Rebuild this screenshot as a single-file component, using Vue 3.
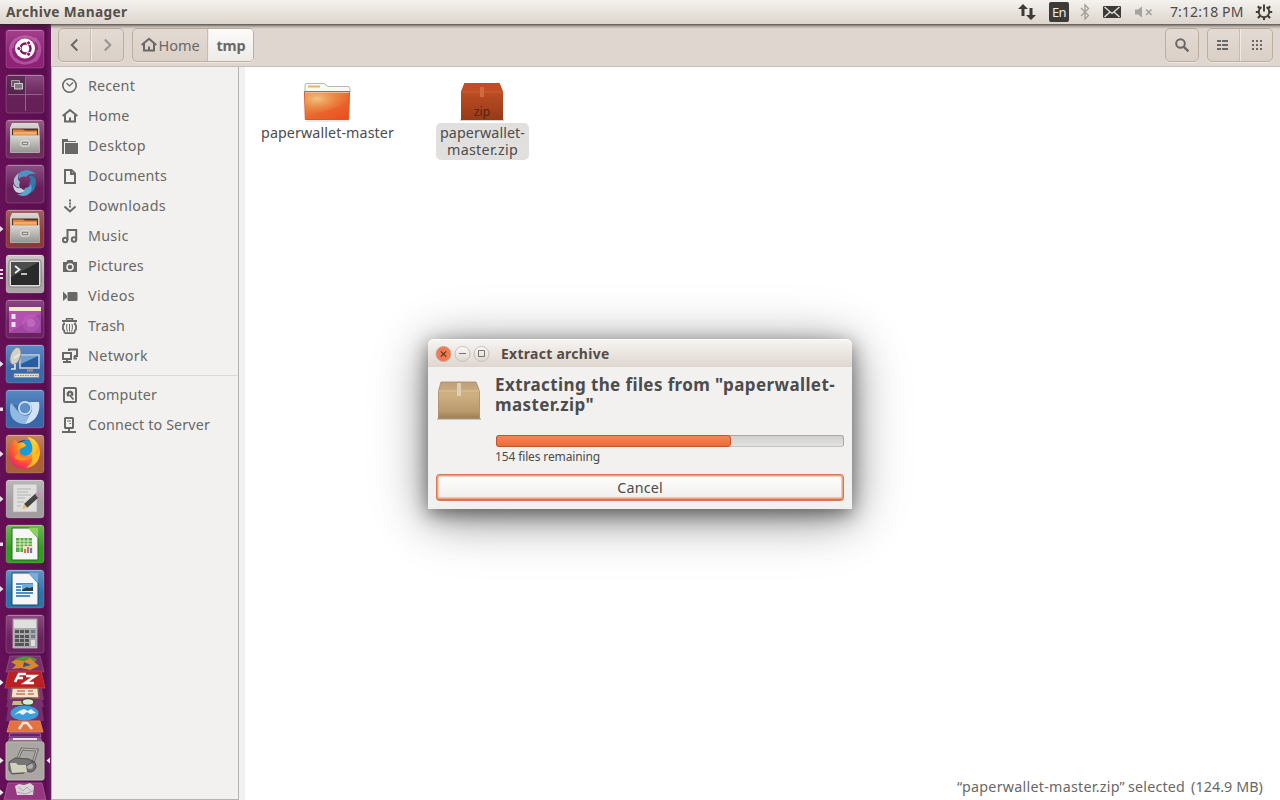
<script setup>
// Tracks a label so that it occupies its designed width in pixels.
const fitText = (el, { value }) => {
  el.style.letterSpacing = '0px'
  const range = document.createRange()
  range.selectNodeContents(el)
  const natural = range.getBoundingClientRect().width
  el.style.letterSpacing = `${(value - natural) / el.textContent.length}px`
}
const vFit = { mounted: fitText }

const places = [
  { id: 'recent', label: 'Recent', w: 47 },
  { id: 'home', label: 'Home', w: 41.5 },
  { id: 'desktop', label: 'Desktop', w: 58 },
  { id: 'documents', label: 'Documents', w: 79 },
  { id: 'downloads', label: 'Downloads', w: 78 },
  { id: 'music', label: 'Music', w: 40.500 },
  { id: 'pictures', label: 'Pictures', w: 56 },
  { id: 'videos', label: 'Videos', w: 47 },
  { id: 'trash', label: 'Trash', w: 37 },
  { id: 'network', label: 'Network', w: 60 },
  { id: 'computer', label: 'Computer', w: 69 },
  { id: 'server', label: 'Connect to Server', w: 122 },
]
places[10].divided = true

const apps = [
  { id: 'dash', top: '#a53f8b', bottom: '#8f2277', mark: '' },
  { id: 'workspaces', top: '#8a4a80', bottom: '#652058', mark: '' },
  { id: 'drawer', top: '#9a5c86', bottom: '#6e2b5e', mark: '' },
  { id: 'swirl', top: '#8b4f83', bottom: '#661f5b', mark: '' },
  { id: 'drawer', top: '#a4605f', bottom: '#8e3a3b', mark: 'arrow' },
  { id: 'terminal', top: '#c9c7c6', bottom: '#a9a6a5', mark: 'bars' },
  { id: 'desk', top: '#8b4680', bottom: '#6b2260', mark: '' },
  { id: 'remote', top: '#5f8cc6', bottom: '#3b68a8', mark: 'arrow' },
  { id: 'chromium', top: '#5a8ac6', bottom: '#3a67a6', mark: 'square' },
  { id: 'firefox', top: '#c48361', bottom: '#a8603e', mark: 'arrow' },
  { id: 'editor', top: '#bcb8ba', bottom: '#a39da2', mark: 'arrow' },
  { id: 'calc', top: '#6fb754', bottom: '#359b24', mark: 'square' },
  { id: 'writer', top: '#6097c2', bottom: '#2d73a8', mark: 'arrow' },
  { id: 'calculator', top: '#8c4980', bottom: '#6b2260', mark: '' },
]
const progress = 67.8
</script>

<template>
  <div class="screen">
    <header class="panel">
      <span v-fit="121.500" class="app-name">Archive Manager</span>
      <div class="indicators">
        <svg class="net" width="18" height="16" viewBox="0 0 18 16" fill="#3c3b37">
          <path d="M5 0l5 5H6.500v7h-3V5H0zM13 16l-5-5h3.500V4h3v7H18z" />
        </svg>
        <span class="lang"><span v-fit="14">En</span></span>
        <svg class="bt" width="10" height="16" viewBox="0 0 10 16" fill="none" stroke="#a5a29d" stroke-width="1.400">
          <path d="M1 4l7.500 7.500L5 15V1l3.500 3.500L1 12" />
        </svg>
        <svg class="mail" width="18" height="12" viewBox="0 0 18 12">
          <rect width="18" height="12" rx="1" fill="#3c3b37" />
          <path d="M1.500 1l7.500 6.500L16.500 1M1.500 11L7 6M16.500 11L11 6" fill="none" stroke="#eae6e1" stroke-width="1.300" />
        </svg>
        <svg class="sound" width="18" height="12" viewBox="0 0 18 12">
          <path d="M0 3.500h3L7 .5v11L3 8.500H0z" fill="#a5a29d" />
          <path d="M11 3.500l5.500 5.500M16.500 3.500L11 9" stroke="#a5a29d" stroke-width="1.700" />
        </svg>
        <span v-fit="73.500" class="clock">7:12:18 PM</span>
        <svg class="cog" width="18" height="18" viewBox="0 0 18 18" fill="none" stroke="#3c3b37">
          <path d="M6.500 4.200a5.300 5.300 0 1 0 5 0" stroke-width="1.900" />
          <path d="M9 1.500V8.500" stroke-width="1.900" />
          <path d="M2.800 3.300l2 2M15.200 3.300l-2 2M.8 9H4M14 9h3.200M2.900 15.100l2.100-2.100M15.100 15.100L13 13M9 14v3" stroke-width="2.100" />
        </svg>
      </div>
    </header>

    <div class="workarea">
      <nav class="launcher">
        <svg v-for="(app, i) in apps" :key="i" class="tile" width="51" height="45" viewBox="0 0 51 45">
          <defs>
            <linearGradient :id="'bg' + i" x2="0" y2="1">
              <stop offset="0" :stop-color="app.top" />
              <stop offset=".6" :stop-color="app.bottom" />
              <stop offset="1" :stop-color="app.bottom" />
            </linearGradient>
            <linearGradient :id="'metal' + i" x2="0" y2="1">
              <stop offset="0" stop-color="#d9d8d5" />
              <stop offset="1" stop-color="#959491" />
            </linearGradient>
            <radialGradient :id="'fox' + i" cx=".7" cy=".15" r=".95">
              <stop offset="0" stop-color="#fff044" />
              <stop offset=".4" stop-color="#ffa01e" />
              <stop offset=".75" stop-color="#ff4a3a" />
              <stop offset="1" stop-color="#e0207c" />
            </radialGradient>
          </defs>
          <rect x="6" y="3" width="38" height="38" rx="3" :fill="`url(#bg${i})`" stroke="#fff" stroke-opacity=".16" />
          <path d="M8 3.500h34" stroke="#fff" stroke-opacity=".25" />
          <path v-if="app.mark === 'arrow'" d="M0 19l3.500 3L0 25z" fill="#e8dce6" />
          <path v-if="app.mark === 'square'" d="M0 20.500h3v3.500H0z" fill="#e8dce6" />
          <path v-if="app.mark === 'bars'" d="M0 18h3M0 22h3M0 26h3" stroke="#e8dce6" stroke-width="2" />

          <g v-if="app.id === 'dash'">
            <path d="M12 21c0-12 18-15 24-6M38 23c1 13-15 17-23 9M16 12c-9 8-6 18 2 23M34 11c8 6 7 17 1 23" fill="none" stroke="#d69aca" stroke-opacity=".4" stroke-width="3" />
            <circle cx="25" cy="21.500" r="10" fill="#fff" />
            <circle cx="25.500" cy="21.500" r="5" fill="none" stroke="#7a1866" stroke-width="2.400" />
            <g fill="#7a1866" stroke="#fff" stroke-width=".9"><circle cx="18.800" cy="21.500" r="2" /><circle cx="28.600" cy="15.900" r="2" /><circle cx="28.600" cy="27.200" r="2" /></g>
          </g>
          <g v-else-if="app.id === 'workspaces'">
            <path d="M7 4h18v18H7z" fill="#4b2544" opacity=".7" />
            <path d="M25.500 5v34M8 22.500h34" stroke="#96608f" />
            <path d="M11.500 8.500h8v6h-8z" fill="#655b63" stroke="#aaa2a8" />
            <path d="M14.500 11.500h8v5.500h-8z" fill="#817b80" stroke="#d5d1d4" />
          </g>
          <g v-else-if="app.id === 'drawer'">
            <path d="M12 6h26l1.500 5v24l-1 1H11l-1-1V11z" :fill="`url(#metal${i})`" />
            <path d="M12 11.500h26v7H12z" fill="#553321" />
            <path d="M13 12.500h10l2 1h12V19H13z" fill="#dd8544" />
            <path d="M13.500 15h23v2.500h-23z" fill="#f2ad68" />
            <path d="M10.500 18.500h29v17h-29z" :fill="`url(#metal${i})`" stroke="#bdbbb8" stroke-width=".6" />
            <rect x="21" y="24" width="8" height="5" rx="1" fill="#8a8988" stroke="#f0f0ef" />
            <path d="M23 26.500h4" stroke="#ddd" />
          </g>
          <g v-else-if="app.id === 'swirl'">
            <path d="M20 10c6-3 12-2 16 2-5-1-8 0-10 3-3-1-5 0-7 2-1-3-1-5 1-7z" fill="#4a94c2" />
            <path d="M29 14c4-1 7 2 7 6 0 6-3 11-8 12 3-4 3-7 1-10 2-2 2-5 0-8z" fill="#2f79a8" />
            <path d="M31 22c2 6-1 12-8 12-2 0-4-1-6-2 5 0 7-2 8-6 2 0 4-1 6-4z" fill="#57a4cf" />
            <path d="M25 28c-2 3-5 4-9 2-2-2-3-5-3-8 3 4 5 5 8 4 1 1 2 2 4 2z" fill="#c7d2da" />
            <path d="M20 26c-5-1-7-4-6-9 1-2 2-4 5-6-2 5-1 7 1 9-1 2-1 4 0 6z" fill="#a4bccb" />
          </g>
          <g v-else-if="app.id === 'terminal'">
            <rect x="9" y="8" width="32" height="27" rx="2" fill="#dedddc" stroke="#7f7d7c" />
            <rect x="11" y="10" width="28" height="23" fill="#292b2a" />
            <path d="M11 10h28L11 25z" fill="#666968" opacity=".55" />
            <path d="M15 14l4.500 3.500L15 21M21 22h6" fill="none" stroke="#f1f3f1" stroke-width="1.700" />
          </g>
          <g v-else-if="app.id === 'desk'">
            <rect x="9" y="10" width="32" height="26" fill="#b451b0" /><path d="M9 36l32-20v20z" fill="#8b3a94" opacity=".45" />
            <circle cx="31" cy="26" r="9" fill="#cd75c7" opacity=".25" /><circle cx="31" cy="26" r="4" fill="#dc8fd7" opacity=".4" /><path d="M9 10h32v4H9z" fill="#eeeacb" />
            <path d="M11.500 17h4v5h-4zM11.500 25h4v5h-4z" fill="#eee2ee" />
          </g>
          <g v-else-if="app.id === 'remote'">
            <rect x="20" y="13" width="19" height="13" fill="#285e9f" stroke="#cfd4d9" stroke-width="1.500" />
            <path d="M21 14h17L21 22z" fill="#6f9ed0" /><path d="M27 27h6v3h-6z" fill="#83888c" />
            <path d="M14 31.500h25v4H14z" fill="#dddcd8" stroke="#85857e" stroke-width=".6" /><path d="M15 33.500h23" stroke="#8b8b85" stroke-dasharray="1.500 1" />
            <ellipse cx="15.500" cy="14" rx="5" ry="9" transform="rotate(20 15.500 14)" fill="#d0d0cd" stroke="#85857f" />
            <path d="M14 16l6-4M15 22v5h-4" fill="none" stroke="#e8e7e2" stroke-width="1.600" />
          </g>
          <g v-else-if="app.id === 'chromium'">
            <path d="M10 16c3 2 5 2 8 2a8 8 0 0 1 14-3c-6-4-14-4-22 1z" fill="#4b7dbb" />
            <path d="M11 16c3 3 6 8 10 11 3 2 6 2 9 0l-5 10c-9 0-15-6-15-14 0-3 0-5 1-7z" fill="#91b9e1" />
            <path d="M29 15h10c2 12-5 21-14 22l5-10c3-3 3-8-1-12z" fill="#d2e3f6" />
            <circle cx="25" cy="21" r="7" fill="#cfe1f5" /><circle cx="25" cy="21" r="5.300" fill="#5e8fca" />
          </g>
          <g v-else-if="app.id === 'firefox'">
            <circle cx="26" cy="22" r="14" fill="#27359e" /><circle cx="27" cy="17" r="9" fill="#149bd9" />
            <path d="M11 11l3-4 4 4c4-2 7 0 8 3l-6 3c-2 8 9 9 12 2 2-5-1-11-5-14 8 1 13 7 13 15 0 10-6 17-15 17S9 31 9 22c0-4 1-7 2-11z" :fill="`url(#fox${i})`" />
            <path d="M27 5c8 4 12 11 8 18 3-1 4-4 4-6 3 10-4 18-13 19 5-4 7-7 6-12 2-7 0-14-5-19z" fill="#ffc526" opacity=".9" />
            <path d="M18 21c2 5 7 6 11 4-3 5-11 5-15 0z" fill="#ff8d22" />
          </g>
          <g v-else-if="app.id === 'editor'">
            <path d="M13 7h24v28H13z" fill="#dfdfdd" stroke="#aaa" stroke-width=".7" />
            <path d="M17 12h14M17 15h11M17 18h14M17 21h8M17 25h7M17 29h4" stroke="#b5b5b2" />
            <path d="M24 27l12-11 3 4-12 11z" fill="#454343" /><path d="M35 17l3-3 3 4-3 3z" fill="#c990b5" /><path d="M22 32l2-5 4 4z" fill="#e6bf75" />
          </g>
          <g v-else-if="app.id === 'calc' || app.id === 'writer'">
            <path d="M12 6h17l9 10v22H12z" fill="#f5f6f5" :stroke="app.id === 'calc' ? '#256b21' : '#174c78'" />
            <path d="M28 6h10v10z" :fill="app.id === 'calc' ? '#8bd35d' : '#75b0dc'" />
            <g v-if="app.id === 'calc'"><path d="M16 16h16v14H16z" fill="#58ab3e" /><path d="M16 19h16M16 22h16M16 25h16M20 16v14M24 16v14M28 16v14" stroke="#d9eec9" /><path d="M23 24h10v7H23z" fill="#f4dfd4" /><path d="M25 31v-4M28 31v-6" stroke="#e46b52" stroke-width="2" /><path d="M31 31v-5" stroke="#438bc2" stroke-width="2" /></g>
            <g v-else><path d="M16 17h17M16 20h5M16 23h5M16 26h17M16 29h14" stroke="#4d8ec3" stroke-width="2" /><path d="M22 17h11v7H22z" fill="#69ace0" /><path d="M22 23l5-3 2 1 4-1v4H22z" fill="#293e43" /></g>
          </g>
          <g v-else>
            <path d="M13 7h24v29H13z" fill="#aaa9aa" stroke="#cac7ca" stroke-width=".7" /><path d="M14 8h22v8H14z" fill="#dfe0dd" />
            <g fill="#555459"><path d="M15 18h4v3h-4zM20 18h4v3h-4zM25 18h4v3h-4zM15 23h4v3h-4zM20 23h4v3h-4zM25 23h4v3h-4zM15 27h4v3h-4zM20 27h4v3h-4zM25 27h4v3h-4zM15 31h9v3h-9zM25 31h4v3h-4z" /></g>
            <path d="M31 18h4v3h-4zM31 23h4v3h-4z" fill="#707a88" /><path d="M31 28h4v6h-4z" fill="#e0e0de" />
          </g>
        </svg>

        <!-- Folded icons at the foot of the launcher -->
        <svg class="stack" width="51" height="143" viewBox="0 657 51 143">
          <path d="M10 656h30l4 16H6z" fill="#77316e" stroke="#95588e" stroke-width=".7" />
          <path d="M14 660c7-5 18-5 23 0l-4 3-18 1z" fill="#53923f" />
          <path d="M11 662l5-2 9 1 5-3 9 8-9 4-9-2-9 1 4-4z" fill="#dc862e" />
          <path d="M24 662l7 3-8 2z" fill="#34547a" />
          <path d="M9 671h32l4 17H5z" fill="#bb2025" stroke="#c23a3c" />
          <path d="M15 682l4-8h7M17 678h6M26 676h9l-10 7h9" fill="none" stroke="#fff" stroke-width="2.600" />
          <path d="M8 688h34l2 12H7z" fill="#7b3874" />
          <path d="M12 688h26l1 10H11z" fill="#eee5d5" stroke="#9b593a" stroke-width="1.500" />
          <path d="M17 691h8M16 694h9M28 691h5M28 694h6" stroke="#d49275" stroke-width="2" />
          <path d="M8 699h34l2 8H6z" fill="#76316e" />
          <path d="M13 701h20v4H12z" fill="#c7b98a" /><ellipse cx="28" cy="702" rx="6" ry="3.500" fill="#dde8d3" stroke="#3c4340" stroke-width="1.500" />
          <path d="M8 707h34l2 14H6z" fill="#77306e" />
          <ellipse cx="24.500" cy="713" rx="14" ry="7.500" fill="#3b9dd9" />
          <path d="M14 715l5-4 5-2 4 2 3-2 5 4-6 1-3-2-4 3-4-2z" fill="#e9f4fa" />
          <path d="M10 721h30l3 11H7z" fill="#e5713e" stroke="#d9865e" /><path d="M19 729l4-6h4l5 6" fill="none" stroke="#f8e6dc" stroke-width="2.600" />
          <path d="M10 733h30l1 4H9z" fill="#662374" stroke="#a667a4" />
          <path d="M9 738h32l2 5H7z" fill="#8a6c87" /><path d="M13 738h24v2H13z" fill="#e6e2df" />
          <rect x="6" y="742" width="38" height="38" rx="2" fill="#aaa7a3" stroke="#bbb7b4" />
          <path d="M17 760l5-11 15 1-4 13" fill="none" stroke="#6f6e6c" stroke-width="3" /><path d="M17 760l5-11 15 1-4 13" fill="none" stroke="#c4c2bf" />
          <circle cx="30" cy="766" r="6" fill="#72716f" stroke="#4b4a49" /><circle cx="30" cy="766" r="3" fill="#adacaa" />
          <path d="M9 762l6-4 14 1 4 3-7 4-2 7-12 1-3-4z" fill="#777674" stroke="#50504e" /><path d="M10 763h6l2 2h8l1 7-15 1z" fill="#d2cfbd" />
          <path d="M8 783h34l4 17H4z" fill="#953880" stroke="#a75093" />
          <path d="M15 786l4-2 5 1 6-2 4 3-1 9H17z" fill="#d8d4d7" /><path d="M18 787l5 4 4-4 5 5M17 792l8 2 8-3" fill="none" stroke="#aaa" />
          <path d="M0 679.500l3.500 3-3.500 3zM0 757.500l3.500 3-3.500 3zM0 789.500l3.500 3-3.500 3zM50 757.500l-3.500 3 3.500 3z" fill="#eee" />
        </svg>
      </nav>

      <main class="window">
        <div class="toolbar">
          <div class="group nav-group">
            <button class="btn"><svg width="16" height="16" viewBox="0 0 16 16"><path d="M10.300 2.500L4.800 8l5.500 5.500" fill="none" stroke="#696866" stroke-width="2" /></svg></button>
            <button class="btn"><svg width="16" height="16" viewBox="0 0 16 16"><path d="M4.800 2.500L10.300 8l-5.500 5.500" fill="none" stroke="#979490" stroke-width="2" /></svg></button>
          </div>
          <div class="group path-group">
            <button class="btn crumb"><svg width="16" height="16" viewBox="0 0 16 16"><path d="M.7 8L8 1.700 15.300 8M3 6.500v7h10v-7M8 14V9.500" fill="none" stroke="#696866" stroke-width="2" /></svg><span v-fit="41">Home</span></button>
            <button class="btn crumb current"><span v-fit="29">tmp</span></button>
          </div>
          <div class="group search-group">
            <button class="btn"><svg width="16" height="16" viewBox="0 0 16 16" fill="none" stroke="#696866"><circle cx="6.500" cy="6.500" r="4.300" stroke-width="2" /><path d="M9.800 9.800l4.700 4.500" stroke-width="2.300" /></svg></button>
          </div>
          <div class="group view-group">
            <button class="btn"><svg width="16" height="16" viewBox="0 0 16 16" fill="#696866"><path d="M1 3h4v2H1zM1 7h4v2H1zM1 11h4v2H1zM6 3h6v2H6zM6 7h6v2H6zM6 11h6v2H6z" /></svg></button>
            <button class="btn"><svg width="16" height="16" viewBox="0 0 16 16" fill="#696866"><path d="M3 3h2v2H3zM7 3h2v2H7zM11 3h2v2h-2zM3 7h2v2H3zM7 7h2v2H7zM11 7h2v2h-2zM3 11h2v2H3zM7 11h2v2H7zM11 11h2v2h-2z" /></svg></button>
          </div>
        </div>

        <div class="browser">
          <aside class="sidebar">
            <template v-for="p in places" :key="p.id">
              <hr v-if="p.divided" class="divider" />
              <div class="place">
                <svg class="place-icon" width="16" height="16" viewBox="0 0 16 16" fill="none" stroke="#696866" stroke-width="1.600">
                  <g v-if="p.id === 'recent'"><circle cx="7.500" cy="7.500" r="6.700" /><path d="M4.500 5l3 3L11 4.500" stroke-width="1.200" /></g>
                  <path v-else-if="p.id === 'home'" d="M.7 8L8 2l7.300 6M3 7v6.500h10V7M8 14V9.500" stroke-width="2" />
                  <g v-else-if="p.id === 'desktop'" fill="#696866" stroke="none"><path d="M0 1h6v2h8v1H2v12H0z" /><path d="M3 5h13v11H3z" /></g>
                  <path v-else-if="p.id === 'documents'" d="M3 2h6.500L13 5.500V15H3zM9 2v4h4" stroke-width="2" />
                  <g v-else-if="p.id === 'downloads'" stroke-width="2"><path d="M8 1.500v8" stroke-dasharray="2 1" /><path d="M2.500 8.500L8 13.500l5.500-5" /></g>
                  <g v-else-if="p.id === 'music'" stroke-width="2"><circle cx="3.200" cy="12" r="2.200" /><circle cx="12" cy="11.500" r="2.200" /><path d="M5.500 12V2h8.700v9.500" /></g>
                  <g v-else-if="p.id === 'pictures'"><path d="M1 4h3.500L5.500 2h5l1 2H15v10H1z" fill="#696866" stroke="none" /><circle cx="8" cy="9" r="3" stroke="#f2f1f0" stroke-width="1.500" /></g>
                  <g v-else-if="p.id === 'videos'" fill="#696866" stroke="none"><path d="M1 3.500l4 4v2l-4 3.500z" /><rect x="5.500" y="4" width="10" height="9" rx="1" /></g>
                  <g v-else-if="p.id === 'trash'"><path d="M4.500 2V.8h6V2" stroke-width="1.500" /><path d="M0 3h15" stroke-width="2" /><path d="M2 4.500v2L1 7v4.500l1 .5.500 2.500 1 .7h8l1-.7.500-2.500 1-.5V7l-1-.5v-2" stroke-width="1.800" /><path d="M5 6c-.7 3-.5 5 .5 7.500M10 6c.7 3 .5 5-.5 7.500" stroke-width="1" /><path d="M7.500 6v7.500" stroke-width="1" /></g>
                  <g v-else-if="p.id === 'network'"><path d="M7 3V1.500h8V8h-3M12.500 8v2.500H15" stroke-width="2" /><path d="M1 5h8v6H1z" stroke-width="2" /><path d="M1 14h8M5 12v2" stroke-width="2" /></g>
                  <g v-else-if="p.id === 'computer'"><rect x="2" y="1" width="12" height="14" rx="1" stroke-width="2" /><path d="M11.500 7A3.500 3.500 0 1 0 6 9.900l2-2.100 2.500 1.500A3.500 3.500 0 0 0 11.500 7z" fill="#696866" stroke="none" /><circle cx="8" cy="7" r="1" fill="#f2f1f0" stroke="none" /><path d="M7.500 8l4 4.500" stroke-width="1.800" /></g>
                  <g v-else stroke-width="2"><rect x="3" y="1" width="8" height="10" rx=".5" /><path d="M5 4h4" stroke-width="1" /><path d="M7.500 6.500h1.500" stroke-width="1.200" /><path d="M7 11v4M0 15h14" /></g>
                </svg>
                <span v-fit="p.w">{{ p.label }}</span>
              </div>
            </template>
          </aside>
          <div class="handle"></div>
          <section class="content">
            <div class="files">
              <div class="file">
                <svg width="50" height="42" viewBox="0 0 50 42">
                  <defs>
                    <linearGradient id="folder" x2=".8" y2="1"><stop offset="0" stop-color="#ea9450" /><stop offset=".5" stop-color="#e96f33" /><stop offset="1" stop-color="#ea501d" /></linearGradient>
                    <radialGradient id="glow" cx=".28" cy=".3" r=".75"><stop offset="0" stop-color="#f3c988" stop-opacity=".9" /><stop offset="1" stop-color="#eb8538" stop-opacity="0" /></radialGradient>
                  </defs>
                  <path d="M2 10V3l1-1.500h18l4 3h21l1 2V10z" fill="#f8f8f7" stroke="#b9b7b4" /><path d="M5 4.500h12" stroke="#e7b273" stroke-width="2" />
                  <path d="M1.500 9.500h45l-.8 28H2.300z" fill="url(#folder)" stroke="#d45a27" /><path d="M2 10h44v5c-6 10-20 14-44 18z" fill="url(#glow)" /><path d="M2 10.500h44" stroke="#f4bd91" /><path d="M3 39h43" stroke="#aaa" opacity=".5" />
                </svg>
                <span class="caption"><span v-fit="133">paperwallet-master</span></span>
              </div>
              <div class="file selected">
                <svg class="archive" width="50" height="42" viewBox="0 0 50 42">
                  <defs><linearGradient id="zip" x2="0" y2="1"><stop offset="0" stop-color="#c75328" /><stop offset="1" stop-color="#963a17" /></linearGradient></defs>
                  <path d="M3 38h44" stroke="#aaa" stroke-width="2" opacity=".5" />
                  <path d="M7.500 1h35L46 10v28H4V10z" fill="url(#zip)" /><path d="M4 10L7.500 1h35L46 10z" fill="#c24d23" /><path d="M4 10h42" stroke="#ca6337" /><path d="M23 5h4v10h-4z" fill="#d06b40" />
                  <text x="17" y="33.500" textLength="16" lengthAdjust="spacingAndGlyphs" class="zip-text">zip</text>
                </svg>
                <span class="caption"><span v-fit="85">paperwallet-</span><br /><span v-fit="71">master.zip</span></span>
              </div>
            </div>
            <footer class="status"><span v-fit="168">“paperwallet-master.zip”</span><span v-fit="57">selected</span><span v-fit="72">(124.9 MB)</span></footer>
          </section>
        </div>
      </main>
    </div>

    <div class="panel-shadow"></div>

    <div class="dialog">
      <div class="titlebar">
        <svg width="56" height="18" viewBox="0 0 56 18">
          <defs><linearGradient id="wbtn" x2="0" y2="1"><stop stop-color="#fbfaf9" /><stop offset="1" stop-color="#dcd6cf" /></linearGradient></defs>
          <circle cx="8.500" cy="9" r="7.500" fill="#f37a50" stroke="#c9a99b" /><path d="M5.800 6.300l5.400 5.400M11.200 6.300l-5.400 5.400" stroke="#5a3525" stroke-width="1.200" />
          <circle cx="27.500" cy="9" r="7.500" fill="url(#wbtn)" stroke="#c6c0b9" /><path d="M24 8.500h7" stroke="#77746f" />
          <circle cx="46.500" cy="9" r="7.500" fill="url(#wbtn)" stroke="#c6c0b9" /><path d="M43.500 5.500h6v6h-6z" fill="none" stroke="#77746f" />
        </svg>
        <span v-fit="108.500">Extract archive</span>
      </div>
      <div class="dialog-body">
        <div class="message">
          <svg class="box" width="48" height="42" viewBox="0 0 48 42">
            <defs><linearGradient id="box" x2="0" y2="1"><stop offset="0" stop-color="#bfa077" /><stop offset=".35" stop-color="#ceb083" /><stop offset=".8" stop-color="#b99a6b" /><stop offset="1" stop-color="#9a7e55" /></linearGradient></defs>
            <path d="M1 39h44" stroke="#aaa" stroke-width="2" opacity=".6" />
            <path d="M5 2h35l3.500 9v27.500h-41V11z" fill="url(#box)" stroke="#a78762" stroke-width=".8" /><path d="M2.500 11h41" stroke="#dac4a2" /><path d="M21 3h4v13h-4z" fill="#e0ceaf" />
          </svg>
          <div class="details">
            <h1><span v-fit="340">Extracting the files from "paperwallet-</span><br /><span v-fit="99">master.zip"</span></h1>
            <div class="track"><div class="fill" :style="{ width: progress + '%' }"></div></div>
            <span v-fit="105" class="remaining">154 files remaining</span>
          </div>
        </div>
        <button class="cancel"><span v-fit="45.500">Cancel</span></button>
      </div>
    </div>
  </div>
</template>

<style>
body { margin: 0; overflow: hidden; }
</style>

<style scoped>
.screen { position: relative; width: 1280px; height: 800px; display: flex; flex-direction: column; overflow: hidden; background: #fff; color: #4c4c4c; font-family: "Noto Sans", "Open Sans", sans-serif; font-size: 14.300px; line-height: 18px; white-space: nowrap; }
.screen * { box-sizing: border-box; }
svg { display: block; flex: none; overflow: visible; }
button { font: inherit; color: inherit; margin: 0; padding: 0; border: 0; background: none; }
.panel { height: 24px; flex: none; display: flex; align-items: center; justify-content: space-between; padding: 0 7px 0 6px; background: linear-gradient(#f4f2ef, #ddd5cc); }
.app-name { font-weight: 700; color: #574f4a; font-size: 13.700px; }
.indicators { display: flex; align-items: center; height: 24px; }
.lang { display: flex; align-items: center; justify-content: center; width: 20px; height: 20px; margin-left: 13px; border-radius: 2px; background: #3c3b37; color: #f2efeb; font-size: 13px; }
.bt { margin-left: 11px; }
.mail { margin-left: 13px; }
.sound { margin-left: 14px; }
.clock { margin-left: 17px; color: #4f4a45; font-size: 14px; width: 74px; }
.cog { margin-left: 11px; }
.workarea { flex: 1; min-height: 0; display: flex; }
.launcher { width: 51px; flex: none; padding-top: 3px; background: linear-gradient(90deg, #650f56, #5b0d50 90%, #6d2060); overflow: hidden; }
.window { flex: 1; min-width: 0; display: flex; flex-direction: column; }
.toolbar { height: 43px; flex: none; display: flex; padding: 4px 7px 0; background: #dfd6cf; border-bottom: 1px solid #c9bbaf; }
.group { display: flex; height: 34px; border: 1px solid #bcaf9f; border-radius: 5px; background: linear-gradient(#e3dad3, #dad0c7); box-shadow: 0 1px 0 #eee8e2; overflow: hidden; }
.btn { display: flex; align-items: center; justify-content: center; width: 32px; }
.btn + .btn { border-left: 1px solid #f0eae4; box-shadow: -1px 0 0 #c8bcb0; }
.nav-group { width: 66px; }
.path-group { width: 122px; margin-left: 8px; font-size: 14.500px; color: #696866; }
.crumb { width: 75px; gap: 2px; padding-right: 1px; }
.crumb.current { width: 45px; padding: 0; background: linear-gradient(#fcfbfa, #edebe8); font-weight: 700; }
.search-group { width: 34px; margin-left: auto; }
.view-group { width: 66px; margin-left: 8px; }
.browser { flex: 1; min-height: 0; display: flex; }
.sidebar { width: 188px; flex: none; padding-top: 4px; background: #f2f1ef; border: solid #b7b4b0; border-width: 0 1px 1px 1px; }
.place { display: flex; align-items: center; gap: 10px; height: 30px; padding-left: 10px; color: #696866; }
.place > span { line-height: 20px; }
.divider { margin: 4px 0; border: 0; height: 1px; background: #dcdad7; }
.handle { width: 6px; flex: none; background: #f2f1f0; }
.content { flex: 1; min-width: 0; display: flex; flex-direction: column; justify-content: space-between; background: #fff; }
.files { display: flex; padding: 15px 0 0 5px; }
.file { width: 155px; display: flex; flex-direction: column; align-items: center; }
.file svg { margin-bottom: -1px; }
.file .archive { margin-right: 1px; }
.caption { padding: 1px 4px 2px; border-radius: 5px; line-height: 17px; text-align: center; }
.selected .caption { background: #e2e0de; }
.zip-text { font: 12px "Noto Sans", sans-serif; fill: #562411; }
.status { display: flex; justify-content: flex-end; padding: 0 17px 4px 0; color: #696866; }
.status span + span { margin-left: 3px; }
.status span + span + span { margin-left: 6px; }
.panel-shadow { position: absolute; left: 0; right: 0; top: 24px; height: 5px; background: linear-gradient(rgba(40,35,30,.72), rgba(40,35,30,.2) 55%, transparent); }
.dialog { position: absolute; left: 428px; top: 339px; width: 424px; height: 170px; border-radius: 6px 6px 0 0; background: #f2f1f0; box-shadow: 0 5px 18px rgba(0,0,0,.42), 0 8px 44px rgba(0,0,0,.42), 0 8px 70px rgba(0,0,0,.14); display: flex; flex-direction: column; }
.titlebar { height: 28px; flex: none; display: flex; align-items: center; gap: 10px; padding: 1px 0 0 7px; border-radius: 6px 6px 0 0; background: linear-gradient(#f7f5f3, #dfd6cf); box-shadow: inset 0 1px #fff; font-size: 13.900px; font-weight: 700; color: #554c46; }
.titlebar span { padding-top: 1px; }
.dialog-body { flex: 1; padding: 8px 8px 8px; display: flex; flex-direction: column; justify-content: space-between; }
.message { display: flex; }
.box { margin: 5px 11px 0 0; }
.details { flex: 1; min-width: 0; display: flex; flex-direction: column; align-items: flex-start; }
h1 { margin: 0; color: #4c4c4c; font-size: 17px; line-height: 20px; font-weight: 700; }
.track { width: 348px; height: 12px; margin: 20px 0 1px 1px; border-radius: 3px; background: linear-gradient(#d0d0cf, #e2e2e1); border: 1px solid #aaa8a6; border-bottom-color: #c5c2c0; }
.fill { height: 12px; margin: -1px 0 0 -1px; border: 1px solid #c3552e; border-radius: 3px; background: linear-gradient(#f48657, #ed6c37); }
.remaining { font-size: 12px; line-height: 18px; }
.cancel { height: 27px; display: flex; align-items: center; justify-content: center; padding-top: 2px; border: 1px solid #d7764f; border-width: 1px 1px 2px; border-radius: 4px; background: linear-gradient(#fff, #efeeec); box-shadow: inset 0 0 0 1.500px #eba27e; }
</style>
